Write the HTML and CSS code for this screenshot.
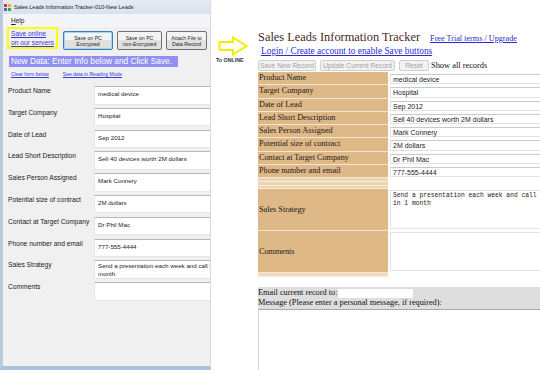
FILE: index.html
```html
<!DOCTYPE html>
<html lang="en">
<head>
    <meta charset="UTF-8">
    <title>Sales Leads Information Tracker</title>
    <link rel="stylesheet" href="styles.css">
</head>
<body>
<div class="screen">
    <section class="app">
        <div class="app-title">
            <span class="app-icon"><i></i><i></i><i></i><i></i></span>
            Sales Leads Information Tracker-010-New Leads
        </div>
        <div class="app-menu"><span><u>H</u>elp</span></div>

        <div class="app-tools">
            <div class="online-box"><a href="#">Save online<br>on our servers</a></div>
            <button class="win-btn focused" style="width:50px">Save on PC<br>Encrypted</button>
            <button class="win-btn" style="width:45px">Save on PC<br>non-Encrypted</button>
            <button class="win-btn" style="width:41px">Attach File to<br>Data Record</button>
        </div>

        <div class="banner">New Data: Enter Info below and Click Save.</div>

        <div class="mini-links">
            <a href="#">Clear form below</a>
            <a href="#">See data in Reading Mode</a>
        </div>

        <div class="app-form">
            <div class="app-row"><label>Product Name</label><div class="win-box">medical device</div></div>
            <div class="app-row"><label>Target Company</label><div class="win-box">Hospital</div></div>
            <div class="app-row"><label>Date of Lead</label><div class="win-box">Sep 2012</div></div>
            <div class="app-row"><label>Lead Short Description</label><div class="win-box">Sell 40 devices worth 2M dollars</div></div>
            <div class="app-row"><label>Sales Person Assigned</label><div class="win-box">Mark Connery</div></div>
            <div class="app-row"><label>Potential size of contract</label><div class="win-box">2M dollars</div></div>
            <div class="app-row"><label>Contact at Target Company</label><div class="win-box">Dr Phil Mac</div></div>
            <div class="app-row"><label>Phone number and email</label><div class="win-box">777-555-4444</div></div>
            <div class="app-row"><label>Sales Strategy</label><div class="win-box multi">Send a presentation each week and call in 1<br>month</div></div>
            <div class="app-row"><label>Comments</label><div class="win-box"></div></div>
        </div>
    </section>

    <div class="hint">
        <svg class="arrow" width="30" height="20" viewBox="0 0 30 20">
            <path d="M1.5 6 H15 V1.5 L28.5 10 L15 18.5 V14 H1.5 Z" fill="none" stroke="#f0f000" stroke-width="2" stroke-linejoin="miter"/>
        </svg>
        <span>To ONLINE</span>
    </div>

    <main class="web">
        <div class="web-head">
            <h1>Sales Leads Information Tracker</h1>
            <a href="#" class="trial">Free Trial terms / Upgrade</a>
        </div>
        <a href="#" class="login">Login / Create account to enable Save buttons</a>

        <div class="web-actions">
            <button class="web-btn" style="width:58px" disabled>Save New Record</button>
            <button class="web-btn" style="width:75px" disabled>Update Current Record</button>
            <button class="web-btn" style="width:30px" disabled>Reset</button>
            <span>Show all records</span>
        </div>

        <div class="record">
            <div class="rec-row"><div class="lbl">Product Name</div><div class="val"><div class="inp">medical device</div></div></div>
            <div class="rec-row"><div class="lbl">Target Company</div><div class="val"><div class="inp">Hospital</div></div></div>
            <div class="rec-row"><div class="lbl">Date of Lead</div><div class="val"><div class="inp">Sep 2012</div></div></div>
            <div class="rec-row"><div class="lbl">Lead Short Description</div><div class="val"><div class="inp">Sell 40 devices worth 2M dollars</div></div></div>
            <div class="rec-row"><div class="lbl">Sales Person Assigned</div><div class="val"><div class="inp">Mark Connery</div></div></div>
            <div class="rec-row"><div class="lbl">Potential size of contract</div><div class="val"><div class="inp">2M dollars</div></div></div>
            <div class="rec-row"><div class="lbl">Contact at Target Company</div><div class="val"><div class="inp">Dr Phil Mac</div></div></div>
            <div class="rec-row"><div class="lbl">Phone number and email</div><div class="val"><div class="inp">777-555-4444</div></div></div>
            <div class="rec-row thin"><div class="lbl"></div><div class="val"></div></div>
            <div class="rec-row thin"><div class="lbl"></div><div class="val"></div></div>
            <div class="rec-row thin"><div class="lbl"></div><div class="val"></div></div>
            <div class="rec-row tall"><div class="lbl">Sales Strategy</div><div class="val"><div class="area">Send a presentation each week and call<br>in 1 month</div></div></div>
            <div class="rec-row tall"><div class="lbl">Comments</div><div class="val"><div class="area"></div></div></div>
            <div class="rec-row thin last"><div class="lbl"></div><div class="val"></div></div>
        </div>

        <div class="email-bar">
            <div>Email current record to: <span class="email-inp"></span></div>
            <div>Message (Please enter a personal message, if required):</div>
        </div>
        <div class="message"></div>
    </main>
</div>
</body>
</html>
```

FILE: styles.css
```css
    body {
        margin: 0;
        background-color: #ffffff;
        overflow: hidden;
    }
    .screen {
        display: flex;
        width: 540px;
        height: 370px;
    }

    /* desktop window on the left */
    .app {
        width: 211px;
        height: 370px;
        box-sizing: border-box;
        flex-shrink: 0;
        overflow: hidden;
        background-color: #f0f0f0;
        border-left: 3px solid #bccbdc;
        border-right: 1px solid #dcdcdc;
        border-bottom: 4px solid #a9c2e0;
        font-family: "Liberation Sans", Arial, sans-serif;
        color: #222;
    }
    .app-title {
        height: 14px;
        display: flex;
        align-items: center;
        gap: 3px;
        padding-left: 1px;
        font-size: 5.5px;
        background: linear-gradient(#e4ebf3, #d8e2ee);
        white-space: nowrap;
    }
    .app-icon {
        display: grid;
        grid-template-columns: 3px 3px;
        gap: 1px;
    }
    .app-icon i {
        width: 3px;
        height: 3px;
        background-color: #d43a2a;
    }
    .app-icon i:nth-child(2) { background-color: #e8b020; }
    .app-icon i:nth-child(3) { background-color: #3b6fc4; }
    .app-icon i:nth-child(4) { background-color: #4aa04a; }
    .app-menu {
        height: 13px;
        line-height: 13px;
        padding-left: 8px;
        font-size: 6.5px;
        background-color: #f3f5f8;
    }
    .app-tools {
        display: flex;
        align-items: flex-start;
        gap: 4px;
        padding-left: 4px;
        height: 23px;
    }
    .online-box {
        width: 51px;
        height: 22px;
        box-sizing: border-box;
        border: 2px solid #ffff00;
        padding-left: 2px;
        margin-right: 1px;
    }
    .online-box a {
        font-size: 6.7px;
        line-height: 8.5px;
        color: #3a3ad8;
        display: block;
        padding-top: 1px;
    }
    .win-btn {
        height: 19px;
        margin-top: 4px;
        padding: 0;
        border: 1px solid #707070;
        border-radius: 2px;
        background: linear-gradient(#f3f3f3 50%, #e0e0e0 50%);
        font-family: "Liberation Sans", Arial, sans-serif;
        font-size: 5.2px;
        line-height: 6px;
        color: #222;
    }
    .win-btn.focused {
        border-color: #3c7fb1;
        box-shadow: inset 0 0 0 1px #a6d3ee;
    }
    .banner {
        width: 169px;
        height: 11px;
        line-height: 11px;
        margin: 6px 0 0 6px;
        padding-left: 2px;
        box-sizing: border-box;
        background-color: #8f8ff4;
        color: #fff;
        font-size: 8.3px;
        white-space: nowrap;
    }
    .mini-links {
        display: flex;
        gap: 14px;
        padding-left: 8px;
        margin-top: 3px;
        height: 8px;
        line-height: 8px;
    }
    .mini-links a {
        font-size: 5px;
        color: #3a3ad8;
    }
    .app-form {
        display: flex;
        flex-direction: column;
        gap: 3.3px;
        margin-top: 8px;
    }
    .app-row {
        display: flex;
        height: 18.5px;
    }
    .app-row label {
        width: 91px;
        flex-shrink: 0;
        box-sizing: border-box;
        padding: 1px 0 0 5px;
        font-size: 6.7px;
        white-space: nowrap;
    }
    .win-box {
        width: 170px;
        flex-shrink: 0;
        box-sizing: border-box;
        background-color: #fff;
        border: 1px solid #e3e5ea;
        border-top-color: #b4b7bd;
        padding: 3px 0 0 3px;
        font-size: 6.2px;
        white-space: nowrap;
    }
    .win-box.multi {
        padding-top: 1px;
        line-height: 7.5px;
    }

    /* arrow between the two */
    .hint {
        width: 47px;
        flex-shrink: 0;
        padding-top: 36px;
        font-family: "Liberation Sans", Arial, sans-serif;
    }
    .arrow {
        display: block;
        margin-left: 7px;
    }
    .hint span {
        display: block;
        margin: 1px 0 0 5px;
        font-size: 5.3px;
        font-weight: bold;
        color: #333;
        white-space: nowrap;
    }

    /* web page on the right */
    .web {
        flex: 1;
        min-width: 0;
        padding-top: 30px;
        font-family: "Liberation Serif", "Times New Roman", serif;
        color: #111;
    }
    .web-head {
        display: flex;
        align-items: baseline;
        gap: 10px;
        height: 16px;
        line-height: 14px;
    }
    .web-head h1 {
        margin: 0;
        font-size: 12.4px;
        font-weight: normal;
        color: #4a1f1f;
        white-space: nowrap;
    }
    .trial {
        font-size: 8.2px;
        color: #2a2ad0;
        white-space: nowrap;
    }
    .login {
        display: block;
        margin-left: 3px;
        height: 11px;
        line-height: 11px;
        font-size: 9.3px;
        color: #2a2ad0;
        white-space: nowrap;
    }
    .web-actions {
        display: flex;
        align-items: center;
        gap: 4px;
        margin-top: 2px;
        height: 12px;
        white-space: nowrap;
    }
    .web-btn {
        height: 11px;
        padding: 0 1px;
        border: 1px solid #cfcfcf;
        border-radius: 2px;
        background-color: #f2f2f2;
        color: #a3a3a3;
        font-family: "Liberation Sans", Arial, sans-serif;
        font-size: 6.7px;
        line-height: 9px;
        white-space: nowrap;
    }
    .web-actions span {
        font-size: 8.4px;
        margin-left: -2px;
    }
    .record {
        margin-top: 1px;
    }
    .rec-row {
        display: flex;
        height: 13.3px;
    }
    .lbl {
        width: 130px;
        flex-shrink: 0;
        box-sizing: border-box;
        background-color: #deb887;
        border-bottom: 1px solid #f4e6d2;
        padding-left: 1px;
        font-size: 8.2px;
        line-height: 12.3px;
        white-space: nowrap;
        color: #1a1a1a;
    }
    .val {
        flex: 1;
        margin-left: 2px;
        padding: 2px 0 1px;
        box-sizing: border-box;
    }
    .inp {
        height: 100%;
        box-sizing: border-box;
        border: 1px solid #e2e2e2;
        border-top-color: #c9c9c9;
        border-right: none;
        padding-left: 2px;
        font-family: "Liberation Sans", Arial, sans-serif;
        font-size: 7px;
        line-height: 9px;
        white-space: nowrap;
        color: #222;
    }
    .rec-row.thin {
        height: 3.6px;
    }
    .rec-row.thin .lbl {
        background-color: #ecd5b0;
        border-bottom-color: #f7ecdb;
    }
    .rec-row.tall {
        height: 42px;
    }
    .rec-row.tall .lbl {
        display: flex;
        align-items: center;
    }
    .rec-row.tall .val {
        padding: 1px 0 2px;
    }
    .area {
        height: 100%;
        box-sizing: border-box;
        border: 1px solid #e2e2e2;
        border-right: none;
        padding: 1px 0 0 2px;
        font-family: "Liberation Mono", "Courier New", monospace;
        font-size: 6.3px;
        line-height: 8.3px;
        white-space: nowrap;
        color: #222;
    }
    .rec-row.last .lbl {
        background-color: #f0dcbc;
    }
    .email-bar {
        margin-top: 10px;
        background-color: #dedede;
        font-size: 8.3px;
        line-height: 10.5px;
        white-space: nowrap;
        padding-top: 1px;
    }
    .email-bar div {
        display: flex;
        align-items: center;
        height: 10.5px;
    }
    .email-inp {
        display: inline-block;
        width: 75px;
        height: 9px;
        margin-left: 1px;
        background-color: #fff;
    }
    .message {
        height: 70px;
        border-top: 1px solid #a8a8a8;
        border-left: 1px solid #d8d8d8;
    }
```
